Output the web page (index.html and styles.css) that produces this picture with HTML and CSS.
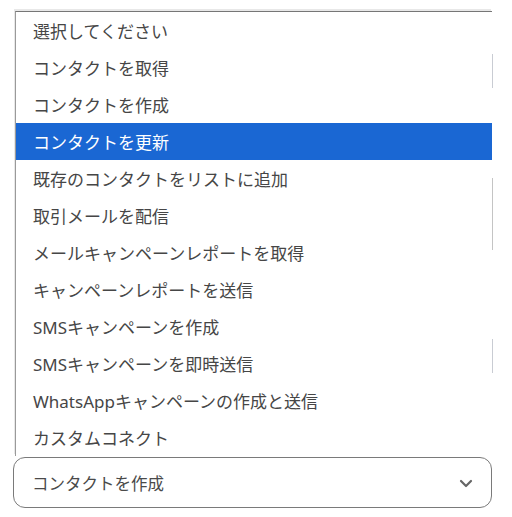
FILE: index.html
```html
<!DOCTYPE html>
<html lang="ja">
<head>
<meta charset="utf-8">
<title>Select</title>
<link rel="stylesheet" href="styles.css">
</head>
<body>
<div class="page">
  <div class="bg-line bg-line-1"></div>
  <div class="bg-line bg-line-2"></div>
  <div class="bg-line bg-line-3"></div>
  <ul class="listbox" role="listbox">
    <li class="option">選択してください</li>
    <li class="option">コンタクトを取得</li>
    <li class="option">コンタクトを作成</li>
    <li class="option selected">コンタクトを更新</li>
    <li class="option">既存のコンタクトをリストに追加</li>
    <li class="option">取引メールを配信</li>
    <li class="option">メールキャンペーンレポートを取得</li>
    <li class="option">キャンペーンレポートを送信</li>
    <li class="option">SMSキャンペーンを作成</li>
    <li class="option">SMSキャンペーンを即時送信</li>
    <li class="option">WhatsAppキャンペーンの作成と送信</li>
    <li class="option">カスタムコネクト</li>
  </ul>
  <div class="select">
    <span class="select-value">コンタクトを作成</span>
    <svg class="chevron" width="14" height="9" viewBox="0 0 14 9" aria-hidden="true">
      <path d="M2 2 L7 7 L12 2" fill="none" stroke="#666" stroke-width="2.2" stroke-linecap="round" stroke-linejoin="round"/>
    </svg>
  </div>
</div>
</body>
</html>
```
FILE: styles.css
```css
html, body {
  margin: 0;
  padding: 0;
  background: #ffffff;
}

body {
  font-family: "Noto Sans", "Noto Sans CJK JP", sans-serif;
  color: #464646;
}

.page {
  position: relative;
  width: 512px;
  height: 517px;
  padding-top: 11px;
  box-sizing: border-box;
}

.bg-line {
  position: absolute;
  left: 492px;
  width: 1px;
  background: #c9ccd3;
}
.bg-line-1 { top: 54px; height: 34px; }
.bg-line-2 { top: 178px; height: 72px; background: #c4c4c4; }
.bg-line-3 { top: 339px; height: 34px; }

.listbox {
  list-style: none;
  margin: 0 0 0 15px;
  padding: 0;
  width: 477px;
  box-sizing: border-box;
  border-top: 1px solid #767676;
  border-left: 1px solid #9a9a9a;
  box-shadow: -1px -2px 0 #e8e8e8;
  background: #fff;
}

.option {
  height: 37px;
  line-height: 39px;
  padding-left: 17px;
  font-size: 17px;
  white-space: nowrap;
  overflow: visible;
}

.option.selected {
  background: #1a67d3;
  color: #ffffff;
}

.select {
  margin: 1px 0 0 13px;
  width: 479px;
  height: 51px;
  box-sizing: border-box;
  border: 1px solid #7a7a7a;
  border-radius: 12px;
  display: flex;
  align-items: center;
  justify-content: space-between;
  padding: 0 18px 0 18px;
}

.select-value {
  font-size: 16.5px;
  color: #4a4a4a;
}

.chevron {
  display: block;
  margin-top: 2px;
}
```
